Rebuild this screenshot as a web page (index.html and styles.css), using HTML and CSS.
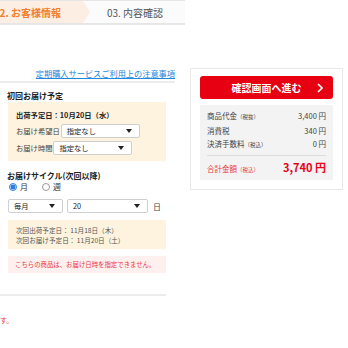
FILE: index.html
```html
<!DOCTYPE html>
<html lang="ja">
<head>
  <meta charset="UTF-8">
  <meta name="viewport" content="width=device-width, initial-scale=1.0">
  <title>お客様情報</title>
  <link rel="stylesheet" href="styles.css">
</head>
<body>
  <div class="page">
    <div class="main-col">
      <div class="steps">
        <div class="step step-current">02. お客様情報</div>
        <div class="step step-next">03. 内容確認</div>
      </div>

      <p class="notice-link"><a href="#">定期購入サービスご利用上の注意事項</a></p>
      <hr class="rule">

      <h2 class="section-title">初回お届け予定</h2>
      <div class="info-box">
        <p class="ship-date">出荷予定日：10月20日（水）</p>
        <div class="field-row">
          <span class="field-label">お届け希望日</span>
          <div class="select">
            <span>指定なし</span>
            <svg class="caret" width="6" height="4" viewBox="0 0 6 4"><path d="M0 0h6L3 4z"/></svg>
          </div>
        </div>
        <div class="field-row">
          <span class="field-label">お届け時間</span>
          <div class="select">
            <span>指定なし</span>
            <svg class="caret" width="6" height="4" viewBox="0 0 6 4"><path d="M0 0h6L3 4z"/></svg>
          </div>
        </div>
      </div>

      <h2 class="section-title cycle-title">お届けサイクル(次回以降)</h2>
      <div class="radio-row">
        <label class="radio-item"><span class="radio checked"></span>月</label>
        <label class="radio-item"><span class="radio"></span>週</label>
      </div>
      <div class="cycle-row">
        <div class="select select-month">
          <span>毎月</span>
          <svg class="caret" width="6" height="4" viewBox="0 0 6 4"><path d="M0 0h6L3 4z"/></svg>
        </div>
        <div class="select select-day">
          <span>20</span>
          <svg class="caret" width="6" height="4" viewBox="0 0 6 4"><path d="M0 0h6L3 4z"/></svg>
        </div>
        <span class="unit">日</span>
      </div>
      <div class="info-box next-box">
        <p>次回出荷予定日： 11月18日（木）</p>
        <p>次回お届け予定日： 11月20日（土）</p>
      </div>
      <div class="warn-box">こちらの商品は、お届け日時を指定できません。</div>
      <hr class="rule rule-bottom">
      <p class="footnote">す。</p>
    </div>

    <aside class="summary-card">
      <button class="btn-confirm">
        <span>確認画面へ進む</span>
        <svg class="chevron" width="6" height="10" viewBox="0 0 6 10"><path d="M1 1l4 4-4 4" fill="none" stroke="#fff" stroke-width="1.6"/></svg>
      </button>
      <div class="summary">
        <div class="sum-row"><span>商品代金<small>（税抜）</small></span><span>3,400 円</span></div>
        <div class="sum-row"><span>消費税</span><span>340 円</span></div>
        <div class="sum-row"><span>決済手数料<small>（税込）</small></span><span>0 円</span></div>
        <div class="sum-row sum-total"><span>合計金額<small>（税込）</small></span><strong>3,740 円</strong></div>
      </div>
    </aside>
  </div>
</body>
</html>
```

FILE: styles.css
```css
body {
  margin: 0;
  font-family: "Noto Sans CJK JP", "Noto Sans", sans-serif;
  color: #333;
  background: #fff;
}

p, h2 {
  margin: 0;
}

.page {
  display: flex;
  align-items: flex-start;
  gap: 5px;
}

.main-col {
  width: 185px;
  flex-shrink: 0;
}

/* steps */
.steps {
  display: flex;
  height: 22px;
  border-top: 1px solid #e6e6e6;
  border-bottom: 2px solid #e6e6e6;
  background: #fbfbfb;
}

.step {
  display: flex;
  align-items: center;
  font-size: 10px;
  white-space: nowrap;
}

.step-current {
  position: relative;
  width: 83px;
  justify-content: flex-end;
  padding-right: 22px;
  box-sizing: border-box;
  background: #fdeee3;
  color: #f0802e;
  font-weight: bold;
}

.step-current::after {
  content: "";
  position: absolute;
  right: -7px;
  top: 0;
  border-left: 7px solid #fdeee3;
  border-top: 11px solid transparent;
  border-bottom: 11px solid transparent;
}

.step-next {
  padding-left: 24px;
  color: #555;
}

/* link + rules */
.notice-link {
  margin-top: 42px;
  padding-right: 10px;
  text-align: right;
  font-size: 8.2px;
  line-height: 12px;
}

.notice-link a {
  color: #2288dd;
}

.rule {
  margin: 2px 10px 0 0;
  border: 0;
  border-top: 2px solid #ececec;
}

.rule-bottom {
  margin: 21px 19px 0 0;
}

/* sections */
.section-title {
  margin-top: 7px;
  padding-left: 7px;
  font-size: 8px;
  line-height: 12px;
  font-weight: bold;
  color: #222;
}

.cycle-title {
  margin-top: 9px;
}

.info-box {
  margin-left: 8px;
  width: 158px;
  box-sizing: border-box;
  padding: 7px 8px 6px;
  background: #fdf3de;
  font-size: 7.3px;
}

.ship-date {
  font-weight: bold;
  line-height: 12px;
  color: #222;
}

.field-row {
  display: flex;
  align-items: center;
  gap: 1px;
  margin-top: 3px;
  color: #444;
}

.select {
  display: flex;
  align-items: center;
  justify-content: space-between;
  width: 79px;
  height: 14px;
  box-sizing: border-box;
  padding: 0 7px 0 5px;
  background: #fff;
  border: 1px solid #cfcfcf;
  border-radius: 2px;
  font-size: 7.3px;
  color: #222;
}

.caret {
  fill: #222;
}

/* cycle */
.radio-row {
  display: flex;
  gap: 14px;
  padding-left: 9px;
  font-size: 8px;
  line-height: 10px;
  color: #333;
}

.radio-item {
  display: flex;
  align-items: center;
  gap: 3px;
}

.radio {
  width: 8px;
  height: 8px;
  box-sizing: border-box;
  border: 1px solid #999;
  border-radius: 50%;
  background: #fff;
}

.radio.checked {
  border: 1px solid #2f7de1;
  background: radial-gradient(circle, #2f7de1 0 2.3px, #cfe1f7 2.6px);
}

.cycle-row {
  display: flex;
  align-items: center;
  gap: 4px;
  margin: 7px 0 0 8px;
}

.select-month {
  width: 55px;
}

.select-day {
  width: 81px;
}

.unit {
  margin-left: 1px;
  font-size: 8px;
  color: #444;
}

.next-box {
  margin-top: 7px;
  padding: 5px 8px 4px;
  font-size: 6.6px;
  line-height: 10px;
  color: #555;
}

.warn-box {
  margin: 7px 0 0 8px;
  width: 158px;
  height: 17px;
  box-sizing: border-box;
  padding: 0 7px;
  background: #fff0f0;
  color: #e8383d;
  font-size: 6.4px;
  line-height: 17px;
}

.footnote {
  margin-top: 19px;
  font-size: 7px;
  line-height: 10px;
  color: #e8383d;
}

/* summary card */
.summary-card {
  margin-top: 68px;
  width: 153px;
  box-sizing: border-box;
  padding: 7px 9px 9px;
  border: 1px solid #e8e8e8;
  background: #fff;
}

.btn-confirm {
  position: relative;
  display: flex;
  align-items: center;
  justify-content: center;
  width: 100%;
  height: 23px;
  border: none;
  border-radius: 3px;
  background: #e60012;
  color: #fff;
  font-family: inherit;
  font-size: 10px;
  font-weight: bold;
  cursor: pointer;
}

.chevron {
  position: absolute;
  right: 10px;
  top: 7px;
}

.summary {
  margin-top: 6px;
  padding: 4px 7px 2px;
  background: #f3f3f3;
  font-size: 7.5px;
  color: #444;
}

.sum-row {
  display: flex;
  justify-content: space-between;
  align-items: baseline;
  line-height: 13px;
}

.sum-row small {
  font-size: 5.5px;
}

.sum-total {
  margin-top: 3px;
  padding-top: 3px;
  border-top: 1px solid #dcdcdc;
  line-height: 16px;
  color: #e8383d;
}

.sum-total strong {
  font-size: 11px;
  color: #e60012;
}
```
